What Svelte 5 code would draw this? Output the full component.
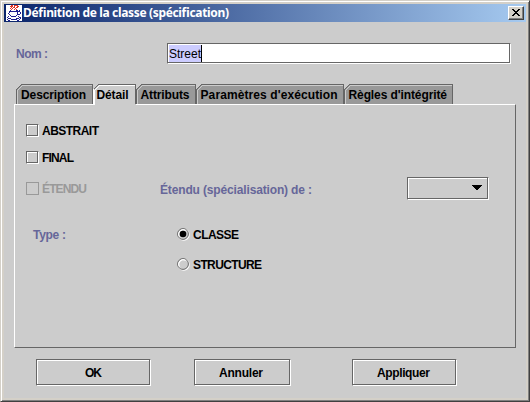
<script>
  const tabs = [
    { label: 'Description', width: 77, length: 65, x: 5 },
    { label: 'Détail', width: 43, length: 32, x: 3.5, active: true },
    { label: 'Attributs', width: 60, length: 49, x: 4.5 },
    { label: "Paramètres d'exécution", width: 148, length: 137, x: 4.5 },
    { label: "Règles d'intégrité", width: 109, length: 98.5, x: 4.5 }
  ];
  const steam = ['.....##.####....', '....###.#..##...', '.....#.##.##....', '....#.#..#......', '.....#..#.#.....'];
  const cup = [
    '................', '................', '................', '................',
    '................', '....#.....##.#..', '...###########..', '...#.......#..#.',
    '..#........#..#.', '...#.......###..', '....#.....#.....', '..#..#####..#...',
    '.#...........##.', '..###.....###.#.', '.#...######..#..', '..##.......##...'
  ];
  const pixels = (rows) => rows.map((r, y) => [...r].map((c, x) => (c === '#' ? `M${x} ${y}h1v1h-1z` : '')).join('')).join('');
</script>

{#snippet txt(label, length, cls = '')}
  <svg class="txt {cls}" width={length} height="16"><text x="0" y="12" textLength={length} lengthAdjust="spacing">{label}</text></svg>
{/snippet}

{#snippet radio(checked)}
  <svg class="radio" width="13" height="13">
    <circle cx="6.8" cy="6.8" r="5.3" fill="none" stroke="#fff" stroke-width="1.3" />
    <circle cx="6" cy="6" r="5.4" fill="none" stroke="#666" />
    <path d="M2.2 8.5A4.6 4.6 0 0 1 8.5 2.2" fill="none" stroke="#fff" />
    {#if checked}<circle cx="6" cy="6" r="3.3" fill="#000" />{/if}
  </svg>
{/snippet}

<div class="window">
  <header>
    <svg class="java" width="16" height="16" shape-rendering="crispEdges">
      <path d="M0 0h16v16H0z" fill="#fff" />
      <path d={pixels(steam)} fill="#e53322" />
      <path d={pixels(cup)} fill="#202090" />
    </svg>
    {@render txt('Définition de la classe (spécification)', 206, 'title')}
    <button class="close" aria-label="Fermer">
      <svg width="8" height="7" shape-rendering="crispEdges"><path d="M0 0h2v1h1v1h2V1h1V0h2v1H7v1H6v1H5v1h1v1h1v1h1v1H6V6H5V5H3v1H2v1H0V6h1V5h1V4h1V3H2V2H1V1H0z" /></svg>
    </button>
  </header>

  <div class="name">
    {@render txt('Nom :', 32, 'label')}
    <div class="field"><span class="sel">{@render txt('Street', 32, 'plain')}</span></div>
  </div>

  <nav>
    {#each tabs as t}
      <div class="tab">
        <svg width={t.width} height={t.active ? 21 : 20} shape-rendering="crispEdges">
          <path d="M0 6L6 0H{t.width}V21H0z" fill={t.active ? '#ccc' : '#999'} />
          <path d="M1.5 21V6.5L6.5 1.5H{t.width - 1}" fill="none" stroke={t.active ? '#fff' : '#ccc'} />
          <path d="M0.5 20V5.5L5.5 0.5H{t.width - 0.5}V20" fill="none" stroke="#666" />
          {#if t.active}<path d="M0.5 5V21" stroke="#fff" />{/if}
          <text x={t.x} y="15" textLength={t.length}>{t.label}</text>
        </svg>
      </div>
    {/each}
  </nav>

  <main>
    <div class="row"><i class="box etched"></i>{@render txt('ABSTRAIT', 57)}</div>
    <div class="row second"><i class="box etched"></i>{@render txt('FINAL', 32)}</div>
    <div class="row extended">
      <i class="box off"></i>{@render txt('ÉTENDU', 45, 'dim')}
      <span class="parent">{@render txt('Étendu (spécialisation) de :', 152, 'label')}</span>
      <div class="combo etched"><svg width="10" height="5" shape-rendering="crispEdges"><path d="M0 0h10v1H9v1H8v1H7v1H6v1H4V4H3V3H2V2H1V1H0z" /></svg></div>
    </div>
    <div class="row type">
      {@render txt('Type :', 33, 'label')}
      <span class="choice">{@render radio(true)}{@render txt('CLASSE', 46)}</span>
    </div>
    <div class="row structure">{@render radio(false)}{@render txt('STRUCTURE', 69)}</div>
  </main>

  <footer>
    <button class="ok etched">{@render txt('OK', 17)}</button>
    <button class="cancel etched">{@render txt('Annuler', 44)}</button>
    <button class="apply etched">{@render txt('Appliquer', 53)}</button>
  </footer>
</div>

<style>
  :global(body) { margin: 0; }
  .window {
    box-sizing: border-box; width: 530px; height: 402px; padding: 3px;
    background: #ccc; border: 1px solid; border-color: #d4d0c8 #404040 #404040 #d4d0c8;
    box-shadow: inset 1px 1px #fff, inset -1px -1px #808080, inset 3px 3px #d4d0c8, inset -3px -3px #d4d0c8;
    overflow: hidden;
    font: bold 12px "Liberation Sans", Arial, sans-serif;
  }
  svg { display: block; flex: none; }
  .txt { overflow: visible; }
  .label { fill: #669; }
  .dim { fill: #999; }
  .plain { font-weight: normal; }
  .title { fill: #fff; font: bold 12px "Noto Sans", "DejaVu Sans", sans-serif; }
  header { display: flex; align-items: center; height: 18px; padding: 0 2px; background: linear-gradient(90deg, #0a246a, #a6caf0); }
  .java { margin-right: 1px; }
  .close {
    box-sizing: border-box; width: 16px; height: 14px; margin-left: auto;
    background: #d4d0c8; border: 1px solid; border-color: #fff #404040 #404040 #fff; box-shadow: inset -1px -1px #808080;
  }
  .close svg { margin: 0 1px 1px 0; }
  .name { display: flex; align-items: center; height: 21px; margin: 21px 15px 0 12px; }
  .field {
    box-sizing: border-box; width: 344px; height: 21px; margin-left: auto; padding: 1px; background: #fff;
    border: 1px solid; border-color: #666 #fff #fff #666; box-shadow: inset -1px -1px #666;
  }
  .sel { box-sizing: border-box; display: block; width: 33px; height: 17px; padding-top: 1px; background: #ccf; border-right: 1px solid #000; }
  nav { display: flex; height: 20px; margin: 20px 0 0 12px; }
  .tab { position: relative; }
  main {
    box-sizing: border-box; width: 502px; height: 244px; margin-left: 10px; padding: 18px 0 0 11px;
    border: 1px solid; border-color: #fff #666 #666 #fff;
  }
  .row { display: flex; align-items: center; height: 15px; gap: 3px; }
  .second { margin-top: 12px; }
  .extended { margin-top: 16px; }
  .box { box-sizing: border-box; width: 13px; height: 13px; }
  .off { border: 1px solid #999; }
  .etched {
    box-sizing: border-box; background: #ccc; border: 1px solid; border-color: #666 #fff #fff #666;
    box-shadow: inset -1px -1px #666, inset 1px 1px #fff;
  }
  .parent { margin: 2px 0 0 70px; }
  .combo { display: flex; align-items: center; justify-content: flex-end; width: 82px; height: 23px; margin-left: 92px; padding: 0 6px 3px 0; }
  .type { margin: 31px 0 0 7px; }
  .choice { display: flex; align-items: center; gap: 3px; margin-left: 108px; }
  .structure { margin: 15px 0 0 151px; }
  footer { display: flex; height: 27px; margin: 11px 0 0 32px; }
  button { display: flex; align-items: center; justify-content: center; padding: 0; font: inherit; }
  .ok { width: 115px; padding-right: 1px; }
  .cancel { width: 97px; margin-left: 43px; padding-right: 3px; }
  .apply { width: 105px; margin-left: 61px; padding-right: 2px; }
</style>
